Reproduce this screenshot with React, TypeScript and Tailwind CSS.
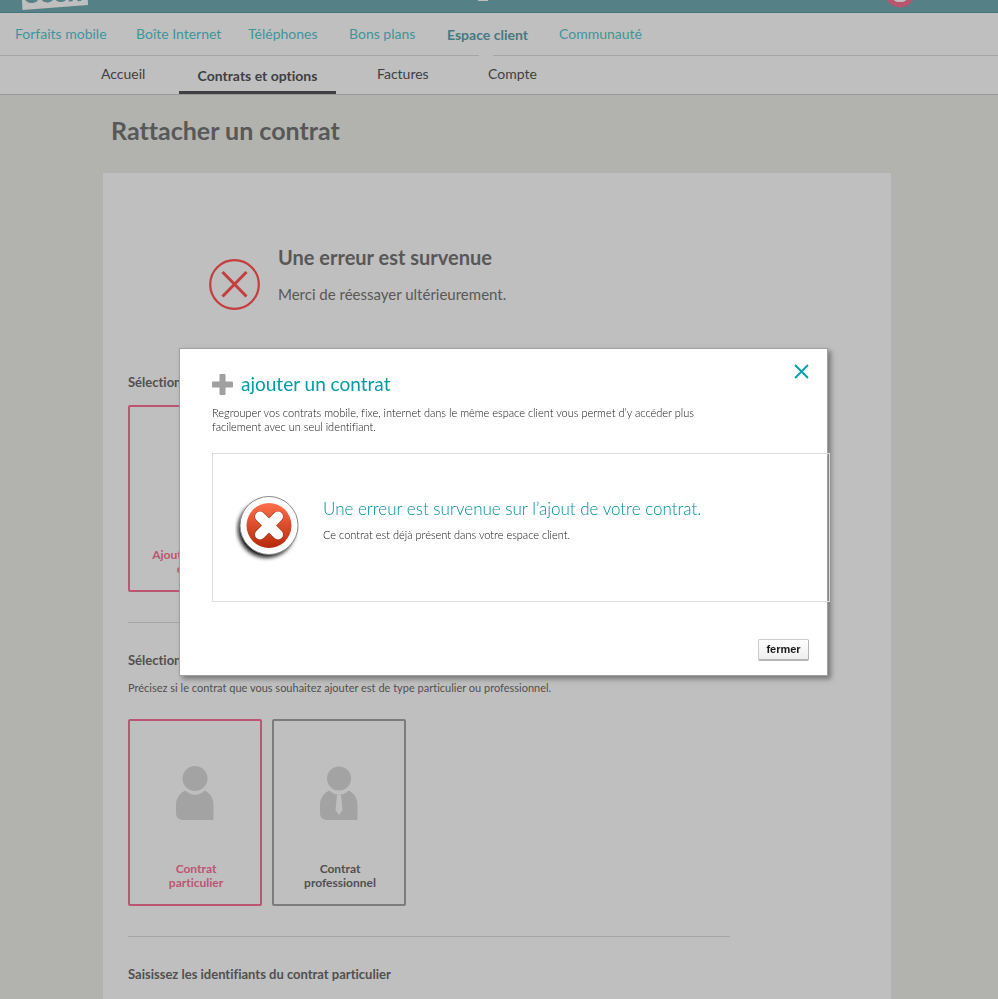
import { useState } from 'react';
import clsx from 'clsx';

const mainNav = [
  { label: 'Forfaits mobile', width: 'w-[121px]' },
  { label: 'Boîte Internet', width: 'w-[112px]' },
  { label: 'Téléphones', width: 'w-[101px]' },
  { label: 'Bons plans', width: 'w-[98px]' },
  { label: 'Espace client', width: 'w-[112px]', active: true },
  { label: 'Communauté', width: 'w-[112px]' },
];

const subNav = [
  { label: 'Accueil', width: 'w-[78px]' },
  { label: 'Contrats et options', width: 'w-[157px]', active: true },
  { label: 'Factures', width: 'w-[111px]' },
  { label: 'Compte', width: 'w-[111px]' },
];

const Logo = () => (
  <svg width="70" height="13" viewBox="0 0 70 13" className="absolute left-5 top-0" aria-label="Sosh">
    <path d="M1 -20 L67 -24 L68 5 L2.500 10 Z" fill="#bfbfbf" />
    <text
      x="5"
      y="3"
      fontFamily="Lato, sans-serif"
      fontWeight="900"
      fontSize="27"
      fill="#558085"
      transform="rotate(-2 5 3)"
    >
      Sosh
    </text>
  </svg>
);

const Header = () => (
  <header>
    <div className="relative h-[13px] overflow-hidden border-b border-[#44757c] bg-[#558085]">
      <Logo />
      <svg width="10" height="2" className="absolute left-[478px] top-0">
        <rect width="10" height="1" fill="#bfbfbf" />
      </svg>
      <svg width="30" height="8" className="absolute left-[885px] top-0">
        <circle cx="15" cy="-7.500" r="15" fill="#b9566f" />
        <ellipse cx="15" cy="0" rx="6" ry="2" fill="#bfbfbf" />
      </svg>
    </div>
    <nav className="flex h-[43px] items-center border-b border-[#a5a5a5] bg-[#bfbfbf] pl-[15px] text-[14px]">
      {mainNav.map((item) => (
        <div key={item.label} className={clsx('relative flex h-full items-center', item.width)}>
          <a href="#" className={item.active ? 'font-bold text-[#457a82]' : 'pb-0.5 text-[#3f949b]'}>
            {item.label}
          </a>
          {item.active && <span className="absolute -bottom-px left-8 h-px w-[14px] bg-[#bfbfbf]" />}
        </div>
      ))}
    </nav>
    <nav className="flex h-[39px] border-b border-[#999999] bg-[#bfbfbf] pl-[101px] text-[14px] text-[#404040]">
      {subNav.map((item) => (
        <a
          key={item.label}
          href="#"
          className={clsx(
            'flex items-center',
            item.width,
            item.active ? 'mr-[41px] justify-center border-b-3 border-[#404042] pt-[3px] font-bold' : 'pb-[3px]'
          )}
        >
          {item.label}
        </a>
      ))}
    </nav>
  </header>
);

const PersonIcon = ({ tie }: { tie?: boolean }) => (
  <svg width="38" height="55" viewBox="0 0 38 55" fill="#a3a3a3">
    <circle cx="19" cy="12.500" r={tie ? 12 : 12.5} />
    <path d="M9 24.500 Q19 33 29 24.500 Q37 29 37.500 38 V54 H6 Q0 53 0 47 V38 Q0.500 29 9 24.500 Z" />
    {tie && <path d="M17 29 H21 L22.500 44 L19 49 L15.500 44 Z" fill="#bfbfbf" />}
  </svg>
);

type ChoiceProps = {
  name: string;
  lines: string[];
  icon?: React.ReactNode;
  checked: boolean;
  onChange: () => void;
};

const Choice = ({ name, lines, icon, checked, onChange }: ChoiceProps) => (
  <label
    className={clsx(
      'relative flex h-[187px] w-[134px] cursor-pointer flex-col items-center justify-between rounded-xs border-2 pb-[14px] pt-[45px] text-center text-[12px] font-bold leading-[14px]',
      checked ? 'border-[#bc5572] text-[#bc5572]' : 'border-[#7c7c7c] text-[#505050]'
    )}
  >
    <input type="radio" name={name} checked={checked} onChange={onChange} className="sr-only" />
    <span>{icon}</span>
    <span className="pl-0.5">
      {lines[0]}
      <br />
      {lines[1]}
    </span>
  </label>
);

const ErrorBadge = () => (
  <svg width="66" height="68" viewBox="0 0 66 68" className="shrink-0">
    <defs>
      <linearGradient id="badge" x1="0" y1="0" x2="0" y2="1">
        <stop offset="0" stopColor="#ff6f4b" />
        <stop offset="1" stopColor="#b52a0c" />
      </linearGradient>
      <filter id="soft" x="-20%" y="-20%" width="140%" height="140%">
        <feGaussianBlur stdDeviation="2" />
      </filter>
    </defs>
    <circle cx="31.500" cy="34" r="28.500" fill="#111111" filter="url(#soft)" />
    <circle cx="34" cy="30.500" r="29" fill="#ffffff" stroke="#8a8a8a" />
    <circle cx="34" cy="30.500" r="22.500" fill="url(#badge)" />
    <path
      d="M25 21.500 L43 39.500 M43 21.500 L25 39.500"
      stroke="#a33a20"
      strokeWidth="11"
      strokeLinecap="round"
    />
    <path
      d="M25 21.500 L43 39.500 M43 21.500 L25 39.500"
      stroke="#ffffff"
      strokeWidth="10"
      strokeLinecap="round"
    />
  </svg>
);

const Modal = ({ onClose }: { onClose: () => void }) => (
  <div className="fixed inset-0 flex items-start pl-[179px] pr-[170px] pt-[348px]">
    <div
      role="dialog"
      aria-labelledby="modal-title"
      className="flex-1 border border-[#a0a0a0] bg-white pb-[14px] pl-8 pr-[18px] pt-[15px] text-[#111111] shadow-[3px_3px_5px_#777777]"
    >
      <div className="flex items-start justify-between">
        <div className="flex items-center gap-2 pt-[7px]">
          <svg width="21" height="28" viewBox="0 0 21 28" fill="#a0a0a0">
            <rect x="7.500" y="3" width="6" height="21" rx="1" />
            <rect x="0" y="10.500" width="21" height="6" rx="1" />
          </svg>
          <h2 id="modal-title" className="pb-0.5 text-[19px] leading-[26px] text-[#009ca6]">
            ajouter un contrat
          </h2>
        </div>
        <button type="button" aria-label="Fermer" onClick={onClose}>
          <svg width="15" height="15" viewBox="0 0 15 15" stroke="#009fb0" strokeWidth="1.800">
            <path d="M1 1 L14 14 M14 1 L1 14" />
          </svg>
        </button>
      </div>
      <p className="mt-[7px] max-w-[490px] text-[11px] font-light leading-[14px]">
        Regrouper vos contrats mobile, fixe, internet dans le même espace client vous permet d’y accéder plus
        facilement avec un seul identifiant.
      </p>
      <div className="-mr-[21px] mt-[19px] flex h-[149px] border border-[#dddddd] pl-[22px] pt-[41px]">
        <ErrorBadge />
        <div className="pl-[22px]">
          <h3 className="text-[17px] font-light leading-7 text-[#008f9a]">
            Une erreur est survenue sur l’ajout de votre contrat.
          </h3>
          <p className="mt-[5px] text-[11px] font-light leading-[14px]">
            Ce contrat est déjà présent dans votre espace client.
          </p>
        </div>
      </div>
      <div className="mt-[37px] flex justify-end">
        <button
          type="button"
          onClick={onClose}
          className="h-[22px] w-[51px] rounded-xs border border-b-2 border-[#cccccc] border-b-[#b5b5b5] border-r-[#b5b5b5] bg-linear-to-b from-white to-[#eeeeee] font-['Liberation_Sans',sans-serif] text-[11px] font-bold leading-none text-[#1a1a1a]"
        >
          fermer
        </button>
      </div>
    </div>
  </div>
);

export default function App() {
  const [open, setOpen] = useState(true);
  const [type, setType] = useState('particulier');

  return (
    <div className="h-screen overflow-hidden bg-[#b2b3ae] font-['Lato',sans-serif] text-[#505050] [font-variant-ligatures:none]">
      <Header />
      <main className="pl-[103px] pr-[107px]">
        <h1 className="pl-2 pt-[19px] text-[25px] font-bold leading-8 text-[#585858]">Rattacher un contrat</h1>
        <div className="mt-[27px] bg-[#bfbfbf] pb-20 pl-[25px] pr-[161px] pt-[70px]">
          <div className="flex items-start pl-[81px]">
            <svg width="51" height="51" viewBox="0 0 51 51" fill="none" stroke="#c43d3f" className="mt-4">
              <circle cx="25.500" cy="25.500" r="24.300" strokeWidth="2.200" />
              <path d="M13.500 13 L37.500 37.500 M37.500 13 L13.500 37.500" strokeWidth="3" />
            </svg>
            <div className="pl-[18px]">
              <h2 className="text-[20px] font-bold leading-7 text-[#585858]">Une erreur est survenue</h2>
              <p className="mt-[13px] text-[15px] leading-5 text-[#585858]">Merci de réessayer ultérieurement.</p>
            </div>
          </div>

          <h3 className="mt-[63px] text-[13px] font-bold leading-[18px]">Sélectionnez</h3>
          <div className="mt-[14px]">
            <Choice name="contrat" lines={['Ajouter un autre', 'contrat']} checked onChange={() => {}} />
          </div>

          <hr className="mt-[30px] border-[#a5a5a5]" />
          <h3 className="mt-7 text-[13px] font-bold leading-[18px]">Sélectionnez</h3>
          <p className="mt-3 text-[11px] leading-[14px]">
            Précisez si le contrat que vous souhaitez ajouter est de type particulier ou professionnel.
          </p>
          <div className="mt-6 flex gap-[10px]">
            <Choice
              name="type"
              lines={['Contrat', 'particulier']}
              icon={<PersonIcon />}
              checked={type === 'particulier'}
              onChange={() => setType('particulier')}
            />
            <Choice
              name="type"
              lines={['Contrat', 'professionnel']}
              icon={<PersonIcon tie />}
              checked={type === 'professionnel'}
              onChange={() => setType('professionnel')}
            />
          </div>

          <hr className="mt-[30px] border-[#a5a5a5]" />
          <h3 className="mt-7 text-[13px] font-bold leading-[18px]">
            Saisissez les identifiants du contrat particulier
          </h3>
        </div>
      </main>
      {open && <Modal onClose={() => setOpen(false)} />}
    </div>
  );
}
